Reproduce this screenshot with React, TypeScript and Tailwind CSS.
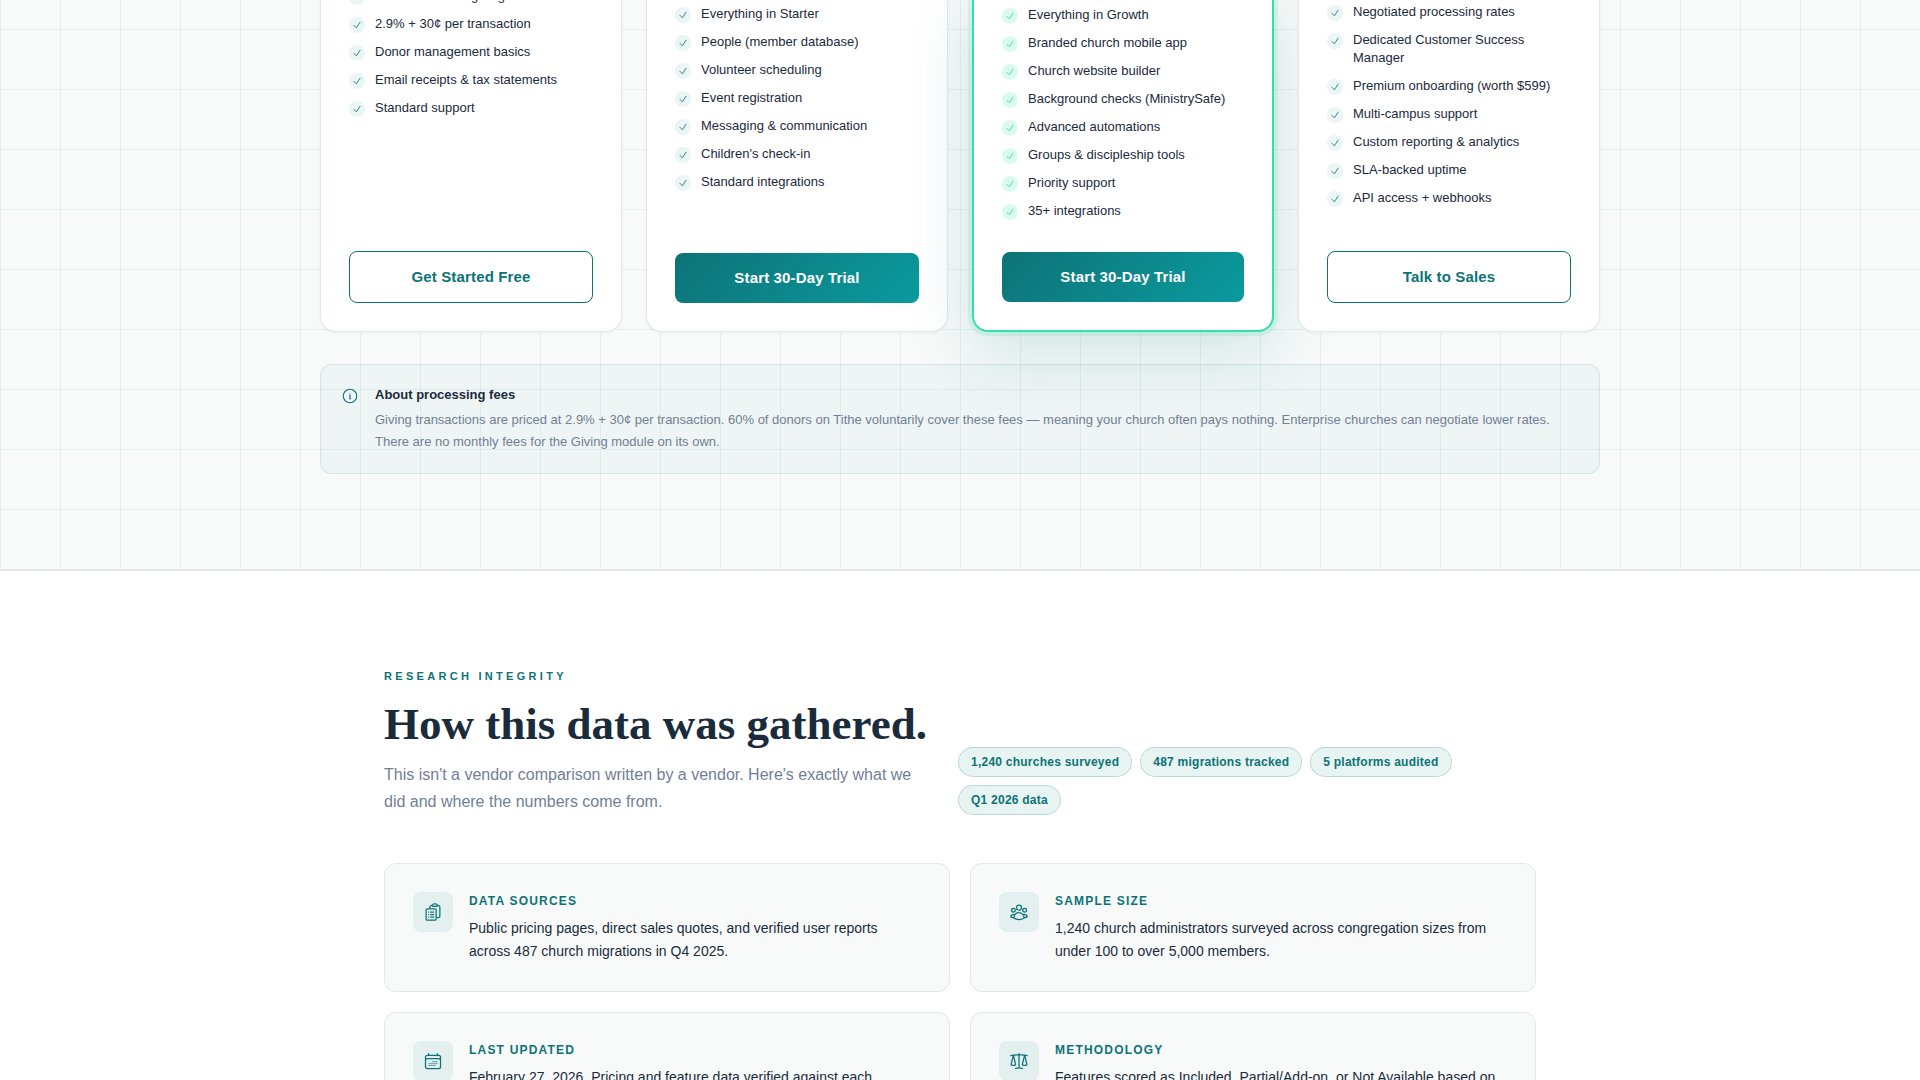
import {
  HiOutlineCalendarDays,
  HiOutlineCheck,
  HiOutlineClipboardDocumentList,
  HiOutlineInformationCircle,
  HiOutlineScale,
  HiOutlineUserGroup,
} from 'react-icons/hi2';
import type { IconType } from 'react-icons';

interface Plan {
  name: string;
  features: string[];
  cta: string;
  solid?: boolean;
  popular?: boolean;
  listTop: string;
}

const PLANS: Plan[] = [
  {
    name: 'Starter',
    features: [
      'Unlimited online giving',
      '2.9% + 30¢ per transaction',
      'Donor management basics',
      'Email receipts & tax statements',
      'Standard support',
    ],
    cta: 'Get Started Free',
    listTop: 'pt-0',
  },
  {
    name: 'Growth',
    features: [
      'Everything in Starter',
      'People (member database)',
      'Volunteer scheduling',
      'Event registration',
      'Messaging & communication',
      "Children's check-in",
      'Standard integrations',
    ],
    cta: 'Start 30-Day Trial',
    solid: true,
    listTop: 'pt-[18px]',
  },
  {
    name: 'Pro',
    features: [
      'Everything in Growth',
      'Branded church mobile app',
      'Church website builder',
      'Background checks (MinistrySafe)',
      'Advanced automations',
      'Groups & discipleship tools',
      'Priority support',
      '35+ integrations',
    ],
    cta: 'Start 30-Day Trial',
    solid: true,
    popular: true,
    listTop: 'pt-[19px]',
  },
  {
    name: 'Enterprise',
    features: [
      'Negotiated processing rates',
      'Dedicated Customer Success Manager',
      'Premium onboarding (worth $599)',
      'Multi-campus support',
      'Custom reporting & analytics',
      'SLA-backed uptime',
      'API access + webhooks',
    ],
    cta: 'Talk to Sales',
    listTop: 'pt-4',
  },
];

const STATS = ['1,240 churches surveyed', '487 migrations tracked', '5 platforms audited', 'Q1 2026 data'];

const SOURCES: { title: string; text: string; icon: IconType }[] = [
  {
    title: 'Data Sources',
    text: 'Public pricing pages, direct sales quotes, and verified user reports across 487 church migrations in Q4 2025.',
    icon: HiOutlineClipboardDocumentList,
  },
  {
    title: 'Sample Size',
    text: '1,240 church administrators surveyed across congregation sizes from under 100 to over 5,000 members.',
    icon: HiOutlineUserGroup,
  },
  {
    title: 'Last Updated',
    text: 'February 27, 2026. Pricing and feature data verified against each platform.',
    icon: HiOutlineCalendarDays,
  },
  {
    title: 'Methodology',
    text: 'Features scored as Included, Partial/Add-on, or Not Available based on documentation.',
    icon: HiOutlineScale,
  },
];

function PlanCard({ plan }: { plan: Plan }) {
  const frame = plan.popular
    ? 'border-2 border-t-0 border-[#36dfa6] shadow-[0_0_0_4px_rgba(54,223,166,0.15),0_20px_64px_rgba(13,115,119,0.16)]'
    : 'border border-t-0 border-[#e2e8e6] shadow-[0_1px_3px_rgba(26,43,60,0.06)]';

  return (
    <article aria-label={plan.name} className={`flex flex-col rounded-b-2xl bg-white px-7 pb-7 ${plan.listTop} ${frame}`}>
      <ul className="mb-8 flex flex-1 flex-col gap-2.5">
        {plan.features.map((f) => (
          <li key={f} className="flex items-start gap-2.5 text-[13px] leading-[18px]">
            <span
              className={`mt-0.5 flex h-4 w-4 flex-shrink-0 items-center justify-center rounded-full ${
                plan.popular ? 'bg-[#dcfbef] text-[#2fd89e]' : 'bg-[#ebf5f3] text-[#0d7377]'
              }`}
            >
              <HiOutlineCheck className="h-2.5 w-2.5 stroke-2" />
            </span>
            <span>{f}</span>
          </li>
        ))}
      </ul>
      <button
        type="button"
        className={`w-full cursor-pointer rounded-lg py-4 text-[15px] leading-[18px] font-bold tracking-[0.01em] ${
          plan.solid
            ? 'bg-linear-135 from-[#0d7377] to-[#0a9b9f] text-white'
            : 'border border-[#0d7377] text-[#0d7377]'
        }`}
      >
        {plan.cta}
      </button>
    </article>
  );
}

export default function App() {
  return (
    <main className="h-screen overflow-hidden bg-white font-['Liberation_Sans',Arial,sans-serif] text-[#1a2b3c]">

      {/* ── Pricing ── */}
      <section className="-mt-[13px] border-b border-[#e2e8e6] bg-[#f7faf9] bg-[linear-gradient(rgba(13,115,119,0.07)_1px,transparent_1px),linear-gradient(90deg,rgba(13,115,119,0.07)_1px,transparent_1px)] bg-[size:60px_60px] bg-[position:0_42px] pb-[95px]">
        <div className="mx-auto max-w-[1280px]">
          <div className="grid grid-cols-4 gap-6">
            {PLANS.map((p) => (
              <PlanCard key={p.name} plan={p} />
            ))}
          </div>

          {/* Fees note */}
          <div className="mt-8 flex items-start gap-4 rounded-xl border border-[#0d7377]/12 bg-[#0d7377]/4 px-5 py-5">
            <HiOutlineInformationCircle className="mt-0.5 h-[18px] w-[18px] flex-shrink-0 text-[#0d7377]" />
            <div className="text-[13px]">
              <p className="mb-1 leading-5 font-bold">About processing fees</p>
              <p className="leading-[22px] text-[#718096]">
                Giving transactions are priced at 2.9% + 30¢ per transaction. 60% of donors on Tithe voluntarily cover
                these fees — meaning your church often pays nothing. Enterprise churches can negotiate lower rates.
                There are no monthly fees for the Giving module on its own.
              </p>
            </div>
          </div>
        </div>
      </section>

      {/* ── Research integrity ── */}
      <section className="border-t border-[#e2e8e6] pt-24 pb-24">
        <div className="mx-auto max-w-[1152px]">
          <div className="flex items-end gap-8">
            <div className="w-[542px] flex-shrink-0">
              <p className="text-[11px] leading-[18px] font-bold tracking-[0.3em] text-[#0d7377] uppercase">
                Research Integrity
              </p>
              <h2 className="mt-3.5 font-['Liberation_Serif','Times_New_Roman',serif] text-[45px] leading-[50px] font-bold whitespace-nowrap">
                How this data was gathered.
              </h2>
              <p className="mt-3 text-base leading-[27px] text-[#718096]">
                This isn't a vendor comparison written by a vendor. Here's exactly what we did and where the numbers
                come from.
              </p>
            </div>
            <ul className="flex flex-wrap gap-2">
              {STATS.map((s) => (
                <li
                  key={s}
                  className="rounded-full border border-[#0d7377]/20 bg-[#e8f4f2] px-3 py-1.5 text-xs leading-4 font-bold tracking-[0.02em] text-[#0d7377]"
                >
                  {s}
                </li>
              ))}
            </ul>
          </div>

          <div className="mt-12 grid grid-cols-2 gap-5">
            {SOURCES.map(({ title, text, icon: Icon }) => (
              <article key={title} className="flex items-start gap-4 rounded-xl border border-[#e2e8e6] bg-[#f7faf9] p-7">
                <div className="flex h-10 w-10 flex-shrink-0 items-center justify-center rounded-lg bg-[#e3f0ef] text-[#0d7377]">
                  <Icon className="h-5 w-5" />
                </div>
                <div>
                  <h3 className="mb-1.5 text-xs leading-[19px] font-bold tracking-[0.1em] text-[#0d7377] uppercase">
                    {title}
                  </h3>
                  <p className="text-sm leading-[23px]">{text}</p>
                </div>
              </article>
            ))}
          </div>
        </div>
      </section>

    </main>
  );
}
